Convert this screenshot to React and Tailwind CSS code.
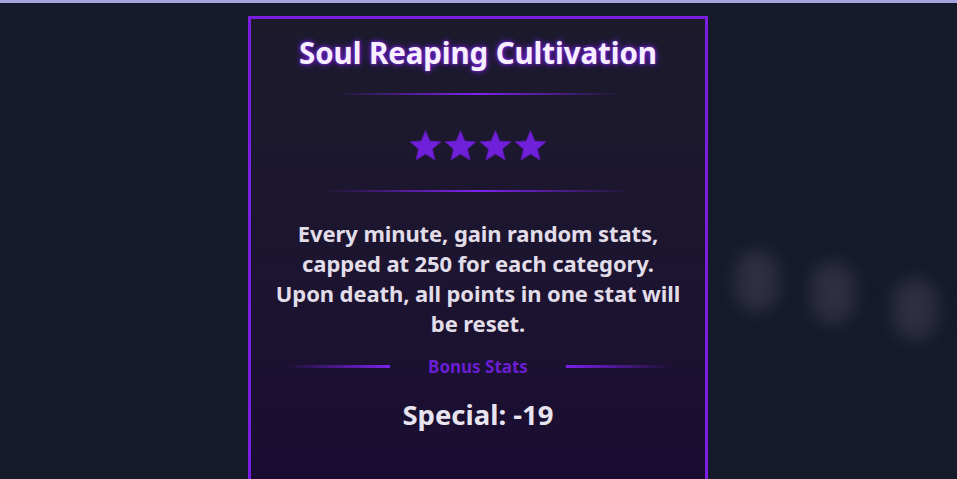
export default function App() {
  const stars = [0, 1, 2, 3];

  return (
    <div
      className="relative h-[479px] w-full overflow-hidden bg-[#141a29]"
      style={{ fontFamily: '"Noto Sans", "Open Sans", sans-serif' }}
    >
      {/* top strip */}
      <div className="h-[3px] w-full bg-[#a7a1dd]" />

      {/* soft blobs in background */}
      <div className="absolute left-[735px] top-[250px] h-[62px] w-[44px] rounded-full bg-[#413c55] opacity-60 blur-[9px]" />
      <div className="absolute left-[811px] top-[262px] h-[62px] w-[44px] rounded-full bg-[#413c55] opacity-60 blur-[9px]" />
      <div className="absolute left-[893px] top-[278px] h-[62px] w-[44px] rounded-full bg-[#413c55] opacity-60 blur-[9px]" />

      <div className="flex justify-center pt-[13px]">
        <div className="ml-[-1px] flex h-[520px] w-[460px] flex-col items-center border-[3px] border-[#7a1fe0] bg-gradient-to-b from-[#1c1b2c] via-[#1c1430] to-[#1a0a32]">
          <h1
            className="mt-[16px] text-[29.5px] font-bold leading-[36px] tracking-[-0.1px] text-[#f7effd]"
            style={{ textShadow: '0 0 3px #8b2cf5, 0 0 7px #6d1ed8' }}
          >
            Soul Reaping Cultivation
          </h1>

          <div className="mt-[22px] h-[2px] w-[290px] bg-gradient-to-r from-transparent via-[#7f22f0] to-transparent" />

          <div className="mt-[33px] flex">
            {stars.map((s) => (
              <svg key={s} width="35" height="35" viewBox="0 0 24 24">
                <path
                  d="M12 1.8l2.95 7.1 7.65.6-5.83 4.98 1.8 7.47L12 17.9l-6.57 4.05 1.8-7.47L1.4 9.5l7.65-.6z"
                  fill="#7020d8"
                  stroke="#5a17b0"
                  strokeWidth="0.6"
                  strokeLinejoin="round"
                />
              </svg>
            ))}
          </div>

          <div className="mt-[27px] h-[2px] w-[310px] bg-gradient-to-r from-transparent via-[#7f22f0] to-transparent" />

          <p className="mt-[26px] text-center text-[22px] font-bold leading-[30px] tracking-[-0.1px] text-[#e2dde9]">
            Every minute, gain random stats,
            <br />
            capped at 250 for each category.
            <br />
            Upon death, all points in one stat will
            <br />
            be reset.
          </p>

          <div className="mt-[16px] flex items-center">
            <div className="h-[3px] w-[105px] bg-gradient-to-r from-transparent to-[#7b20ea]" />
            <span className="mx-[38px] text-[17px] font-bold text-[#6b1ed2]">Bonus Stats</span>
            <div className="h-[3px] w-[105px] bg-gradient-to-l from-transparent to-[#7b20ea]" />
          </div>

          <div className="mt-[14px] text-[27.5px] font-bold text-[#e8e4ef]">Special: -19</div>
        </div>
      </div>
    </div>
  );
}
